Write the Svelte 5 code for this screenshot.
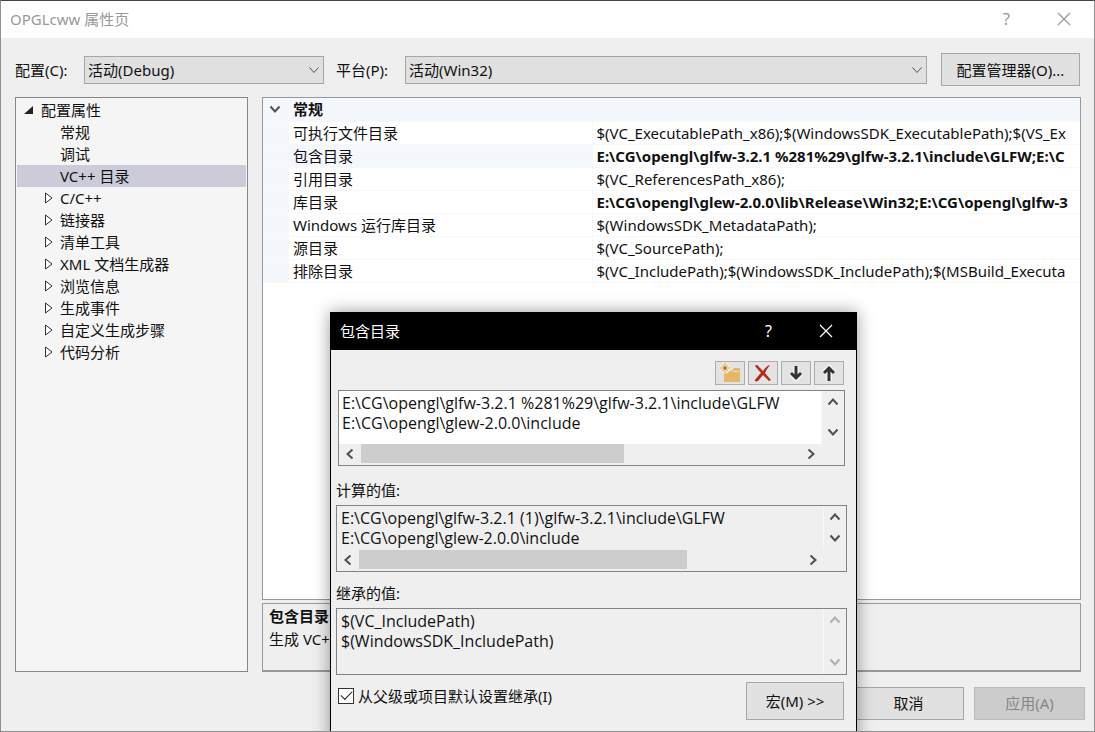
<script lang="ts">
	const tree = [
		{ label: '常规' },
		{ label: '调试' },
		{ label: 'VC++ 目录' },
		{ label: 'C/C++', children: true },
		{ label: '链接器', children: true },
		{ label: '清单工具', children: true },
		{ label: 'XML 文档生成器', children: true },
		{ label: '浏览信息', children: true },
		{ label: '生成事件', children: true },
		{ label: '自定义生成步骤', children: true },
		{ label: '代码分析', children: true }
	];

	const properties = [
		{ name: '可执行文件目录', value: '$(VC_ExecutablePath_x86);$(WindowsSDK_ExecutablePath);$(VS_Ex' },
		{ name: '包含目录', value: 'E:\\CG\\opengl\\glfw-3.2.1 %281%29\\glfw-3.2.1\\include\\GLFW;E:\\C', changed: true },
		{ name: '引用目录', value: '$(VC_ReferencesPath_x86);' },
		{ name: '库目录', value: 'E:\\CG\\opengl\\glew-2.0.0\\lib\\Release\\Win32;E:\\CG\\opengl\\glfw-3', changed: true },
		{ name: 'Windows 运行库目录', value: '$(WindowsSDK_MetadataPath);' },
		{ name: '源目录', value: '$(VC_SourcePath);' },
		{ name: '排除目录', value: '$(VC_IncludePath);$(WindowsSDK_IncludePath);$(MSBuild_Executa' }
	];

	let selected = $state('VC++ 目录');
	let current = $state('包含目录');
	let inherit = $state(true);
	let paths = $state('E:\\CG\\opengl\\glfw-3.2.1 %281%29\\glfw-3.2.1\\include\\GLFW\nE:\\CG\\opengl\\glew-2.0.0\\include');

	const evaluated = 'E:\\CG\\opengl\\glfw-3.2.1 (1)\\glfw-3.2.1\\include\\GLFW\nE:\\CG\\opengl\\glew-2.0.0\\include';
	const inherited = '$(VC_IncludePath)\n$(WindowsSDK_IncludePath)';
</script>

{#snippet chevron(direction: string)}
	<svg class="chevron {direction}" width="12" height="12" viewBox="0 0 12 12" aria-hidden="true">
		<path d="M1.5 3.5 6 8.5l4.5-5" />
	</svg>
{/snippet}

{#snippet vscroll(disabled: boolean)}
	<div class="vscroll">
		<button type="button" aria-label="向上滚动" {disabled}>{@render chevron('up')}</button>
		<button type="button" aria-label="向下滚动" {disabled}>{@render chevron('down')}</button>
	</div>
{/snippet}

{#snippet hscroll(size: number)}
	<div class="hscroll">
		<button type="button" aria-label="向左滚动">{@render chevron('left')}</button>
		<div class="track"><div class="thumb" style="width: {size}%"></div></div>
		<button type="button" aria-label="向右滚动">{@render chevron('right')}</button>
	</div>
{/snippet}

{#snippet cross()}
	<svg width="14" height="14" viewBox="0 0 14 14" aria-hidden="true">
		<path d="M1 1 13 13M13 1 1 13" fill="none" stroke="currentColor" stroke-width="1.2" />
	</svg>
{/snippet}

<div class="window">
	<header class="titlebar">
		<span class="title">OPGLcww 属性页</span>
		<button type="button" aria-label="帮助">?</button>
		<button type="button" aria-label="关闭">{@render cross()}</button>
	</header>

	<div class="config">
		<label for="configuration">配置(C):</label>
		<div class="combo short">
			<select id="configuration"><option>活动(Debug)</option></select>
			{@render chevron('thin')}
		</div>
		<label for="platform">平台(P):</label>
		<div class="combo">
			<select id="platform"><option>活动(Win32)</option></select>
			{@render chevron('thin')}
		</div>
		<button type="button" class="push manager">配置管理器(O)...</button>
	</div>

	<main>
		<nav class="tree">
			<button type="button" class="root">
				<svg width="10" height="10" viewBox="0 0 10 10" aria-hidden="true"><path d="M9 1v8H0z" fill="#222" /></svg>
				配置属性
			</button>
			<ul>
				{#each tree as item}
					<li>
						<button type="button" class:selected={item.label === selected} onclick={() => (selected = item.label)}>
							<span class="expander">
								{#if item.children}
									<svg width="9" height="12" viewBox="0 0 9 12" aria-hidden="true">
										<path d="M1.5 1v10L8 6z" fill="#fff" stroke="#333" />
									</svg>
								{/if}
							</span>
							{item.label}
						</button>
					</li>
				{/each}
			</ul>
		</nav>

		<div class="details">
			<div class="grid">
				<table>
					<colgroup>
						<col class="gutter" />
						<col class="names" />
						<col />
					</colgroup>
					<thead>
						<tr>
							<th class="toggle">{@render chevron('down')}</th>
							<th colspan="2">常规</th>
						</tr>
					</thead>
					<tbody>
						{#each properties as property}
							<tr class:current={property.name === current} onclick={() => (current = property.name)}>
								<td class="margin"></td>
								<td class="name">{property.name}</td>
								<td class:changed={property.changed}>{property.value}</td>
							</tr>
						{/each}
					</tbody>
				</table>
			</div>
			<section class="description">
				<strong>{current}</strong>
				<p>生成 VC++</p>
			</section>
		</div>
	</main>

	<footer>
		<button type="button" class="push">取消</button>
		<button type="button" class="push" disabled>应用(A)</button>
	</footer>

	<div class="dialog" role="dialog" aria-labelledby="dialog-title">
		<header class="titlebar">
			<span class="title" id="dialog-title">包含目录</span>
			<button type="button" aria-label="帮助">?</button>
			<button type="button" aria-label="关闭">{@render cross()}</button>
		</header>

		<div class="edit">
			<div class="tools">
				<button type="button" aria-label="新行">
					<svg width="22" height="22" viewBox="0 0 22 22" aria-hidden="true">
						<path d="M5 9h8l2-3h6v14H5z" fill="#e5b768" />
						<path d="M14 9.5h6" stroke="#f6e3bd" />
						<circle cx="6" cy="6" r="5.5" fill="#f7ead4" />
						<path d="M6 1v10M1 6h10M3 3l6 6M9 3 3 9" stroke="#d9a658" />
						<circle cx="6" cy="6" r="1.5" fill="#9b6a25" />
					</svg>
				</button>
				<button type="button" aria-label="删除">
					<svg width="22" height="22" viewBox="0 0 22 22" aria-hidden="true">
						<path d="M3 4c1-2 3-1 4 1l4 4c2-3 5-6 7-6-2 3-4 5-5 8l6 7-2 1-6-6c-2 2-4 5-5 6-2 1-4 0-3-1 2-3 4-5 6-7z" fill="#b52a14" />
					</svg>
				</button>
				<button type="button" aria-label="下移">
					<svg width="22" height="22" viewBox="0 0 22 22" aria-hidden="true">
						<path d="M11 4v12M6 11l5 5 5-5" fill="none" stroke="#f4f4f4" stroke-width="6" />
						<path d="M11 4v12M6 11l5 5 5-5" fill="none" stroke="#333" stroke-width="3" />
					</svg>
				</button>
				<button type="button" aria-label="上移">
					<svg width="22" height="22" viewBox="0 0 22 22" aria-hidden="true">
						<path d="M11 19V6M6 11l5-5 5 5" fill="none" stroke="#f4f4f4" stroke-width="6" />
						<path d="M11 19V6M6 11l5-5 5 5" fill="none" stroke="#333" stroke-width="3" />
					</svg>
				</button>
			</div>

			<div class="box editable">
				<textarea aria-label="包含目录" wrap="off" spellcheck="false" bind:value={paths}></textarea>
				{@render vscroll(false)}
				{@render hscroll(60)}
			</div>
		</div>

		<div class="values">
			<label for="evaluated">计算的值:</label>
			<div class="box">
				<textarea id="evaluated" wrap="off" spellcheck="false" readonly value={evaluated}></textarea>
				{@render vscroll(false)}
				{@render hscroll(74)}
			</div>
			<label for="inherited">继承的值:</label>
			<div class="box">
				<textarea id="inherited" wrap="off" spellcheck="false" readonly value={inherited}></textarea>
				{@render vscroll(true)}
			</div>
		</div>

		<div class="actions">
			<label class="check">
				<input type="checkbox" bind:checked={inherit} />
				从父级或项目默认设置继承(I)
			</label>
			<button type="button" class="push">宏(M) &gt;&gt;</button>
		</div>
	</div>
</div>

<style>
	:global(body) {
		margin: 0;
	}

	.window,
	.window * {
		box-sizing: border-box;
	}

	.window {
		position: relative;
		display: flex;
		flex-direction: column;
		min-height: 100vh;
		overflow: hidden;
		border: 1px solid #8f8f8f;
		border-top-color: #474247;
		background: #efefef;
		color: #111;
		font: 15px/22px 'Noto Sans', 'Noto Sans CJK SC', sans-serif;
	}

	button,
	select,
	textarea {
		margin: 0;
		padding: 0;
		border: 0;
		border-radius: 0;
		background: none;
		color: inherit;
		font: inherit;
	}

	svg {
		display: block;
		flex: none;
	}

	.titlebar {
		display: flex;
		align-items: center;
		height: 37px;
		padding: 0 2px 2px 9px;
		background: #fff;
		color: #999;
	}

	.title {
		flex: 1;
	}

	.titlebar button {
		display: grid;
		place-items: center;
		width: 57px;
		height: 35px;
		font-size: 16px;
	}

	.config {
		display: flex;
		align-items: center;
		padding: 15px 14px 11px;
	}

	.config label {
		flex: none;
		width: 69px;
	}

	.combo {
		display: grid;
		flex: 1;
		align-items: center;
	}

	.combo.short {
		flex: 0 1 240px;
		margin-right: 12px;
	}

	.combo select,
	.combo :global(svg) {
		grid-area: 1 / 1;
	}

	.combo select {
		width: 100%;
		height: 28px;
		padding: 0 24px 0 3px;
		border: 1px solid #a6a6a6;
		background: #e0e0e0;
		appearance: none;
	}

	.combo .chevron {
		justify-self: end;
		margin-right: 4px;
		pointer-events: none;
	}

	.push {
		height: 33px;
		border: 1px solid #a6a6a6;
		background: #e1e1e1;
	}

	.push:disabled {
		border-color: #bbb;
		background: #ccc;
		color: #858585;
	}

	.manager {
		width: 139px;
		margin-left: 14px;
	}

	.chevron {
		fill: none;
		stroke: #505050;
		stroke-width: 2;
	}

	.chevron.thin {
		stroke-width: 1;
	}

	.chevron.up {
		transform: rotate(180deg);
	}

	.chevron.left {
		transform: rotate(90deg);
	}

	.chevron.right {
		transform: rotate(-90deg);
	}

	main {
		display: grid;
		flex: 1;
		grid-template-columns: 233px minmax(0, 1fr);
		gap: 14px;
		padding: 0 13px 0 14px;
	}

	.tree {
		padding: 1px;
		border: 1px solid #828790;
		background: #f5f5f5;
	}

	.tree ul {
		margin: 0;
		padding: 0;
		list-style: none;
	}

	.tree button {
		display: flex;
		align-items: center;
		width: 100%;
		height: 22px;
		padding-left: 27px;
		white-space: nowrap;
	}

	.tree .root {
		gap: 7px;
		padding-left: 7px;
	}

	.tree .selected {
		background: #cbcbd9;
	}

	.expander {
		width: 16px;
	}

	.details {
		display: flex;
		flex-direction: column;
		gap: 3px;
		min-width: 0;
	}

	.grid {
		flex: 1;
		border: 1px solid #919aa3;
		background: #fff;
	}

	table {
		width: 100%;
		border-collapse: collapse;
		table-layout: fixed;
	}

	.gutter {
		width: 26px;
	}

	.names {
		width: 303px;
	}

	tr {
		height: 23px;
	}

	th,
	td {
		overflow: hidden;
		padding: 0 0 0 4px;
		border-bottom: 1px solid #f7f8fa;
		text-align: left;
		white-space: nowrap;
	}

	th,
	.margin,
	.current .name {
		background: #f4f7fc;
	}

	.toggle {
		padding-left: 6px;
	}

	.name {
		border-right: 1px solid #f5f7fb;
	}

	.changed,
	strong {
		font-weight: 700;
	}

	.description {
		height: 69px;
		padding: 1px 6px;
		border: 1px solid #999;
		border-bottom-width: 2px;
		white-space: nowrap;
	}

	.description p {
		margin: 1px 0 0;
	}

	footer {
		display: flex;
		justify-content: flex-end;
		gap: 10px;
		padding: 15px 9px 11px;
	}

	footer .push {
		width: 111px;
		padding-bottom: 2px;
	}

	.dialog {
		position: absolute;
		top: 311px;
		left: 329px;
		width: 527px;
		height: 440px;
		border: 1px solid #000;
		background: #efefef;
		box-shadow: 0 0 16px rgb(0 0 0 / 40%);
	}

	.dialog .titlebar {
		background: #000;
		color: #fff;
	}

	.edit {
		padding: 11px 11px 0 7px;
	}

	.tools {
		display: flex;
		justify-content: flex-end;
		gap: 3px;
		padding-right: 1px;
		margin-bottom: 5px;
	}

	.tools button {
		display: grid;
		place-items: center;
		width: 30px;
		height: 24px;
		border: 1px solid #adadad;
		background: #e3e3e3;
	}

	.box {
		display: grid;
		grid-template-columns: minmax(0, 1fr) 22px;
		grid-template-rows: minmax(0, 1fr) auto;
		height: 67px;
		border: 1px solid #828282;
	}

	.box.editable {
		height: 76px;
	}

	.box textarea {
		display: block;
		width: 100%;
		height: 100%;
		padding: 2px 4px;
		overflow: hidden;
		border-right: 1px solid #f8f8f8;
		outline: 0;
		font-family: 'Open Sans', 'Noto Sans CJK SC', sans-serif;
		font-size: 16px;
		line-height: 20px;
		resize: none;
		white-space: pre;
	}

	.box.editable textarea {
		padding: 2px 3px;
		background: #fff;
	}

	.vscroll {
		display: flex;
		flex-direction: column;
		justify-content: space-between;
		padding: 2px 0 3px;
	}

	.vscroll button,
	.hscroll button {
		display: grid;
		place-items: center;
		width: 22px;
		height: 18px;
	}

	.vscroll button:disabled {
		opacity: 0.4;
	}

	.hscroll {
		display: flex;
		align-items: center;
		height: 21px;
		padding-bottom: 2px;
	}

	.track {
		flex: 1;
	}

	.thumb {
		height: 19px;
		background: #cdcdcd;
	}

	.values {
		padding: 3px 9px 0 5px;
	}

	.values label {
		display: block;
		padding: 10px 0 4px;
	}

	.actions {
		display: flex;
		align-items: flex-start;
		justify-content: space-between;
		padding: 7px 12px 0 7px;
	}

	.actions .push {
		width: 98px;
		height: 38px;
	}

	.check {
		display: flex;
		align-items: center;
		gap: 4px;
		padding-top: 3px;
	}

	.check input {
		display: grid;
		place-items: center;
		width: 16px;
		height: 16px;
		margin: 0;
		padding-bottom: 4px;
		border: 1px solid #333;
		background: #fff;
		appearance: none;
	}

	.check input:checked::before {
		width: 10px;
		height: 5px;
		border: solid #222;
		border-width: 0 0 1px 1px;
		content: '';
		transform: rotate(-45deg);
	}
</style>
